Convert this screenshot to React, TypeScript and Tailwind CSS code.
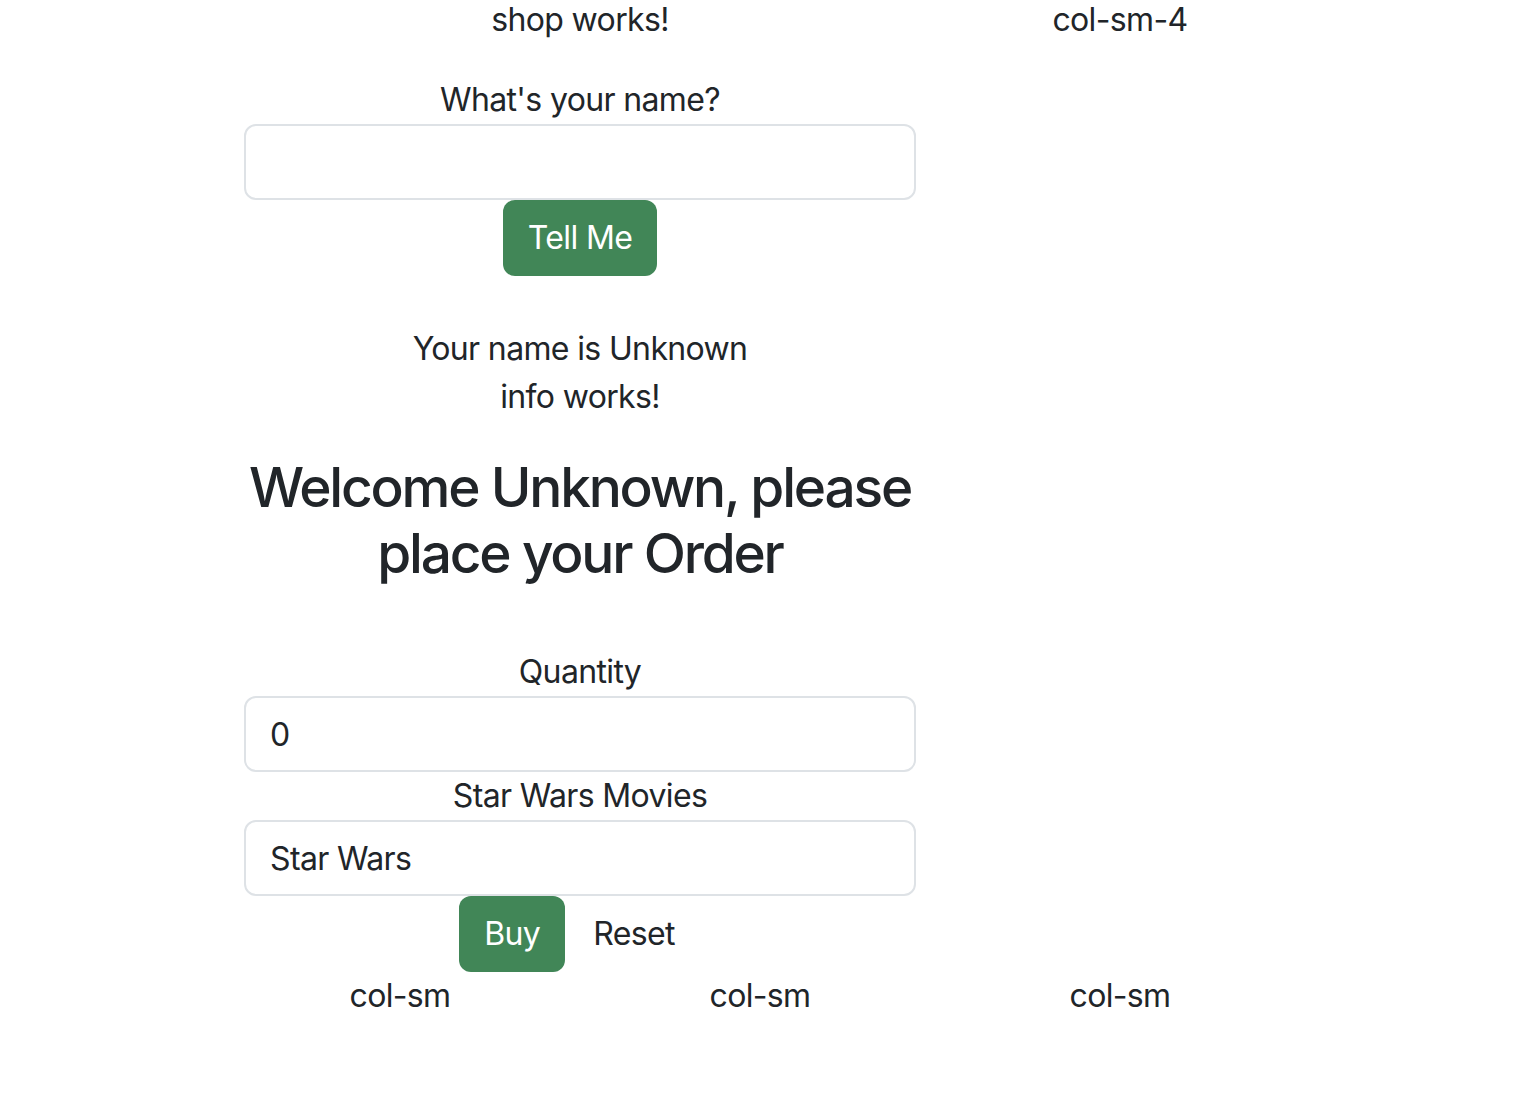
export default function App() {
  return (
    <div className="min-h-screen bg-white font-['Inter',sans-serif] text-[32px] leading-[48px] tracking-[-0.02em] text-[#212529]">
      <div className="mx-auto w-[1080px]">
        {/* Top row: col-sm-8 + col-sm-4 */}
        <div className="flex">
          <div className="w-[720px] px-[24px] text-center">
            <p className="-mt-[4px] mb-[32px]">shop works!</p>

            <label className="block">What's your name?</label>
            <input
              type="text"
              className="block h-[76px] w-full rounded-[12px] border-2 border-[#dee2e6] px-[24px] outline-none"
            />
            <button className="h-[76px] rounded-[12px] bg-[#418657] px-[25px] text-white">
              Tell Me
            </button>

            <p className="mt-[49px]">Your name is Unknown</p>
            <p>info works!</p>

            <h2 className="mt-[33px] text-[55px] font-medium leading-[66px] tracking-[-0.04em]">
              Welcome Unknown, please place your Order
            </h2>

            <label className="mt-[62px] block">Quantity</label>
            <input
              type="text"
              defaultValue="0"
              className="block h-[76px] w-full rounded-[12px] border-2 border-[#dee2e6] px-[24px] outline-none"
            />
            <label className="block">Star Wars Movies</label>
            <input
              type="text"
              defaultValue="Star Wars"
              className="block h-[76px] w-full rounded-[12px] border-2 border-[#dee2e6] px-[24px] outline-none"
            />
            <div className="flex justify-center gap-[2px]">
              <button className="h-[76px] rounded-[12px] bg-[#418657] px-[25px] text-white">
                Buy
              </button>
              <button className="h-[76px] px-[26px]">Reset</button>
            </div>
          </div>
          <div className="w-[360px] px-[24px] text-center">
            <p className="-mt-[4px]">col-sm-4</p>
          </div>
        </div>

        {/* Bottom row: three col-sm */}
        <div className="flex">
          <div className="w-[360px] px-[24px] text-center">col-sm</div>
          <div className="w-[360px] px-[24px] text-center">col-sm</div>
          <div className="w-[360px] px-[24px] text-center">col-sm</div>
        </div>
      </div>
    </div>
  );
}
